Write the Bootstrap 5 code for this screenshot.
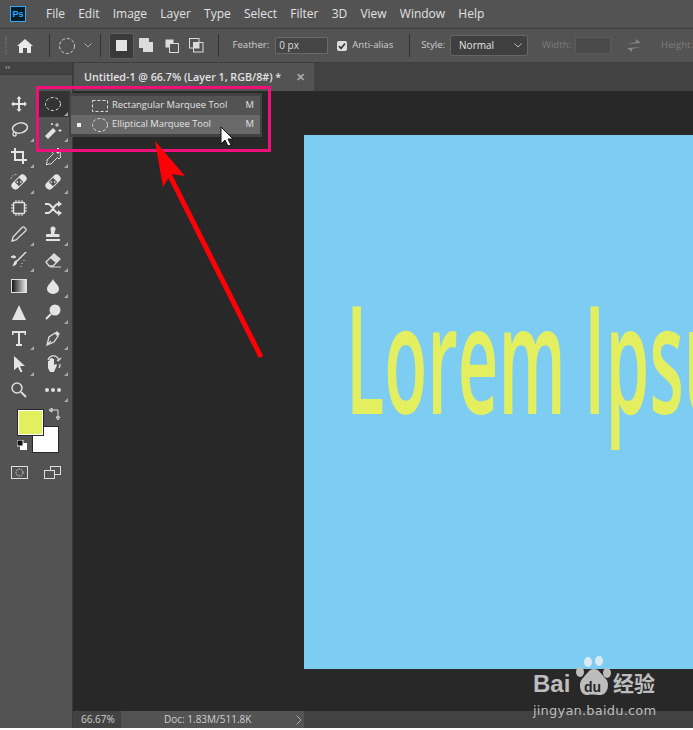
<!DOCTYPE html>
<html lang="en">
<head>
  <meta charset="UTF-8">
  <title>Photoshop Marquee Tool</title>
  <meta name="viewport" content="width=device-width, initial-scale=1">
  <link href="https://cdn.jsdelivr.net/npm/bootstrap@5.3.3/dist/css/bootstrap.min.css" rel="stylesheet">
  <style>
    html, body { height: 100%; }
    body {
      width: 693px; height: 730px; overflow: hidden; position: relative;
      background: #fff; color: #dcdcdc;
      font-family: "Liberation Sans", Arial, sans-serif; font-size: 11px;
    }
    .ps-window { height: 728px; background: #535353; }
    svg { display: block; }

    .ps-menubar { height: 29px; flex: none; background: #535353; border-bottom: 1px solid #3e3e3e; padding-left: 10px; }
    .ps-logo { width: 16px; height: 16px; border: 1px solid #31a8ff; background: #001d26; color: #31a8ff; font-size: 9px; font-weight: 700; line-height: 14px; text-align: center; margin-right: 20px; }
    .ps-menu { font-family: "Open Sans", sans-serif; font-size: 12px; color: #e2e2e2; margin-right: 13.2px; }

    .ps-options { height: 34px; flex: none; background: #535353; border-bottom: 1px solid #3e3e3e; white-space: nowrap; overflow: hidden; }
    .ps-grip { width: 6px; height: 18px; margin: 0 9px 0 5px; background: repeating-linear-gradient(#6c6c6c 0 1px, transparent 1px 2px); }
    .ps-sep { width: 1px; height: 23px; background: #333; flex: none; }
    .ps-mode { width: 25px; height: 26px; flex: none; }
    .ps-mode-on { background: #3a3a3a; border: 1px solid #5f5f5f; border-radius: 2px; }
    .ps-lbl { font-family: "Open Sans", sans-serif; font-size: 9.6px; color: #cfcfcf; }
    .ps-dim { color: #7d7d7d; }
    .ps-field { height: 17px; flex: none; background: #454545; border: 1px solid #6a6a6a; border-radius: 1px; font-size: 10px; font-family: "Open Sans", sans-serif; line-height: 15px; padding-left: 3px; color: #dcdcdc; }
    .ps-check { width: 10px; height: 10px; flex: none; background: #dedede; border-radius: 2px; }
    .ps-select { width: 78px; height: 21px; flex: none; background: #3f3f3f; border: 1px solid #666; border-radius: 3px; font-family: "Open Sans", sans-serif; font-size: 10px; color: #e6e6e6; padding: 0 5px 0 8px; }

    .ps-body { height: 665px; }
    .ps-tools { width: 73px; background: #535353; border-right: 1px solid #3a3a3a; }
    .ps-collapse { height: 12px; background: #424242; color: #b5b5b5; font-size: 8px; line-height: 10px; padding-left: 5px; border-bottom: 1px solid #3a3a3a; }
    .ps-toolgrid { display: grid; grid-template-columns: 34px 34px; grid-auto-rows: 26px; padding: 16px 0 0 2px; }
    .ps-tool { display: flex; align-items: center; justify-content: center; position: relative; }
    .ps-tool-more::after { content: ""; position: absolute; right: 2px; bottom: 1px; border: 2px solid transparent; border-right-color: #a8a8a8; border-bottom-color: #a8a8a8; }
    .ps-tool-on { background: #333; }
    .ps-swatches { height: 52px; position: relative; }
    .ps-fg { width: 25px; height: 25px; background: #e2ef5e; border: 1px solid #fff; outline: 1px solid #2a2a2a; position: absolute; left: 18px; top: 7px; z-index: 1; }
    .ps-bg { width: 25px; height: 25px; background: #fff; outline: 1px solid #2a2a2a; position: absolute; left: 33px; top: 24px; }

    .ps-main { flex: 1; min-width: 0; background: #282828; }
    .ps-tabs { height: 29px; background: #424242; border-bottom: 1px solid #2a2a2a; padding-left: 1px; }
    .ps-tab { width: 240px; background: #535353; font-size: 10.7px; font-weight: 600; color: #e2e2e2; font-family: "Open Sans", sans-serif; padding: 0 9px 0 10px; white-space: nowrap; }
    .ps-canvas-area { flex: 1; min-height: 0; padding: 43px 0 0 231px; overflow: hidden; }
    .ps-canvas { background: #7dcdf3; height: 534px; width: 462px; overflow: hidden; }
    .ps-lorem { font-family: "Open Sans", sans-serif; font-weight: 600; color: #e4ef60; font-size: 150px; line-height: 1; white-space: nowrap; transform-origin: 0 0; transform: translate(42px, 146px) scaleX(0.47); }
    .ps-status { height: 17px; background: #424242; font-family: "Open Sans", sans-serif; font-size: 10px; color: #cfcfcf; }
    .ps-zoomval { width: 48px; padding-left: 8px; line-height: 17px; }
    .ps-docval { width: 183px; background: #535353; padding-left: 43px; line-height: 17px; white-space: nowrap; }

    /* things lying over the document */
    .ps-flyout { position: absolute; left: 69px; top: 93px; width: 193px; height: 44px; background: #424242; padding: 3px 2px; font-family: "Open Sans", sans-serif; font-size: 9.4px; color: #e2e2e2; }
    .ps-fly-row { height: 19px; padding: 0 6px 0 6px; background: #535353; }
    .ps-fly-on { background: #696969; }
    .ps-bullet { width: 4px; height: 4px; background: #eee; margin-right: 11px; }
    .ps-nobullet { width: 4px; margin-right: 11px; }
    .ps-pinkbox { position: absolute; left: 36px; top: 86px; width: 235px; height: 66px; border: 3px solid #f0107a; pointer-events: none; }
    .ps-overlay { position: absolute; left: 0; top: 0; pointer-events: none; }
    .ps-wm { position: absolute; left: 533px; top: 670px; color: #bdbdbd; line-height: 1; }
    .ps-wm-bai { font-size: 24px; font-weight: 700; position: absolute; left: 0; top: 2px; }
    .ps-wm-cn { font-family: "Noto Sans CJK SC", sans-serif; font-size: 21px; font-weight: 700; position: absolute; left: 80px; top: 2px; white-space: nowrap; }
    .ps-wm-url { font-family: "DejaVu Sans", sans-serif; font-size: 13px; position: absolute; left: 0; top: 34px; white-space: nowrap; letter-spacing: .2px; }
    .ps-wm-du { position: absolute; left: 51px; top: 10px; font-size: 14px; font-weight: 700; color: #282828; }
  </style>
</head>
<body>
  <div class="ps-window d-flex flex-column">
    <div class="ps-menubar d-flex align-items-center">
      <div class="ps-logo">Ps</div>
      <span class="ps-menu">File</span><span class="ps-menu">Edit</span><span class="ps-menu">Image</span><span class="ps-menu">Layer</span><span class="ps-menu">Type</span><span class="ps-menu">Select</span><span class="ps-menu">Filter</span><span class="ps-menu">3D</span><span class="ps-menu">View</span><span class="ps-menu">Window</span><span class="ps-menu">Help</span>
    </div>

    <div class="ps-options d-flex align-items-center">
      <div class="ps-grip"></div>
      <svg width="16" height="14" viewBox="0 0 16 14" style="margin:0 17px 0 0;flex:none;transform:translateX(1px)"><path d="M8 0 16 7h-2v7h-4V9H6v5H2V7H0z" fill="#e8e8e8"/></svg>
      <div class="ps-sep" style="margin-right:8px"></div>
      <svg width="18" height="18" viewBox="0 0 18 18" style="flex:none"><circle cx="9" cy="9" r="7.5" fill="none" stroke="#d5d5d5" stroke-dasharray="3 2"/></svg>
      <svg width="8" height="5" viewBox="0 0 8 5" style="margin:0 8px;flex:none"><path d="M.5.5 4 4 7.5.5" fill="none" stroke="#a5a5a5"/></svg>
      <div class="ps-sep" style="margin-right:8px"></div>
      <div class="ps-mode ps-mode-on d-flex align-items-center justify-content-center"><svg width="11" height="11"><rect width="11" height="11" fill="#e4e4e4"/></svg></div>
      <div class="ps-mode d-flex align-items-center justify-content-center"><svg width="15" height="15"><path d="M0 0h10v4h4v10H4v-4H0z" fill="#dcdcdc"/></svg></div>
      <div class="ps-mode d-flex align-items-center justify-content-center"><svg width="14" height="14"><rect x=".5" y=".5" width="8" height="8" fill="#dcdcdc"/><rect x="4.5" y="4.5" width="9" height="9" fill="#535353" stroke="#dcdcdc"/></svg></div>
      <div class="ps-mode d-flex align-items-center justify-content-center" style="margin-right:9px"><svg width="15" height="15"><rect x=".5" y=".5" width="9.5" height="9.5" fill="none" stroke="#dcdcdc"/><rect x="4.5" y="4.5" width="9.5" height="9.5" fill="none" stroke="#dcdcdc"/><rect x="4.5" y="4.5" width="5.5" height="5.5" fill="#dcdcdc"/></svg></div>
      <div class="ps-sep" style="margin-right:13px"></div>
      <span class="ps-lbl" style="margin-right:6px">Feather:</span>
      <div class="ps-field" style="width:53px;margin-right:9px">0 px</div>
      <div class="ps-check d-flex align-items-center justify-content-center" style="margin-right:5px"><svg width="8" height="8" viewBox="0 0 8 8"><path d="M1 4 3 6.5 7 1.5" fill="none" stroke="#333" stroke-width="1.6"/></svg></div>
      <span class="ps-lbl" style="margin-right:16px">Anti-alias</span>
      <div class="ps-sep" style="margin-right:11px"></div>
      <span class="ps-lbl" style="margin-right:5px">Style:</span>
      <div class="ps-select d-flex align-items-center justify-content-between" style="margin-right:14px">Normal<svg width="8" height="5" viewBox="0 0 8 5"><path d="M.5.5 4 4 7.5.5" fill="none" stroke="#bbb"/></svg></div>
      <span class="ps-lbl ps-dim" style="margin-right:4px">Width:</span>
      <div class="ps-field" style="width:36px;background:#4a4a4a;border-color:#5c5c5c;margin-right:16px"></div>
      <svg width="14" height="13" viewBox="0 0 14 13" style="margin-right:20px;flex:none"><path d="M0 5 L9 3V0l5 4-14 1zM14 8 5 10v3L0 9z" fill="#868686"/></svg>
      <span class="ps-lbl ps-dim">Height:</span>
    </div>

    <div class="ps-body d-flex">
      <div class="ps-tools flex-shrink-0">
        <div class="ps-collapse">&#8249;&#8249;</div>
        <div class="ps-toolgrid">
          <div class="ps-tool"><svg width="16" height="16" viewBox="0 0 16 16"><path d="M8 0 10.5 3H9V7h4V5.500L16 8l-3 2.500V9H9v4h1.500L8 16l-2.500-3H7V9H3v1.500L0 8l3-2.500V7h4V3H5.500z" fill="#e4e4e4"/></svg></div>
          <div class="ps-tool ps-tool-on ps-tool-more"><svg width="18" height="16" viewBox="0 0 18 16"><ellipse cx="9" cy="8" rx="7.500" ry="6.500" fill="none" stroke="#ddd" stroke-dasharray="3 2"/></svg></div>
          <div class="ps-tool ps-tool-more"><svg width="18" height="17" viewBox="0 0 18 17"><ellipse cx="10" cy="6" rx="7.500" ry="5" transform="rotate(-12 10 6)" fill="none" stroke="#ddd" stroke-width="1.500"/><path d="M4 10c-2 2-1 4 1 4s1-3 0-3" fill="none" stroke="#ddd" stroke-width="1.300"/></svg></div>
          <div class="ps-tool ps-tool-more"><svg width="17" height="17" viewBox="0 0 17 17"><path d="M0 14 8 6l3 3-8 8z" fill="#e4e4e4"/><path d="M12 1v4M10 3h4M15 7v3M13.500 8.500h3M7 1v2M6 2h2" stroke="#e4e4e4"/></svg></div>
          <div class="ps-tool ps-tool-more"><svg width="16" height="16" viewBox="0 0 16 16"><path d="M4 0v12h12M0 4h12v12" fill="none" stroke="#e4e4e4" stroke-width="2"/></svg></div>
          <div class="ps-tool ps-tool-more"><svg width="15" height="17" viewBox="0 0 15 17"><path d="M14 2 12 0 9 3 8 2 6 4 7.500 5.500 1 12v3L0 16l1 1 1-1h3l6.500-6.500L13 11l2-2-1-1 1-3z" fill="none" stroke="#ddd"/><path d="M9 3l3 3 2-2-2-3z" fill="#ddd"/></svg></div>
          <div class="ps-tool ps-tool-more"><svg width="18" height="18" viewBox="0 0 18 18"><path d="M1 6a5 5 0 0 1 7-4" fill="none" stroke="#ddd" stroke-dasharray="1.500 1.500"/><g transform="rotate(-45 9 9)"><rect x="0" y="5" width="18" height="8" rx="4" fill="#e4e4e4"/><rect x="6" y="6" width="6" height="6" fill="#535353"/><path d="M7 7h1.500v1.500H7zM9.500 9.500H11V11H9.500z" fill="#e4e4e4"/></g></svg></div>
          <div class="ps-tool ps-tool-more"><svg width="18" height="18" viewBox="0 0 18 18"><g transform="rotate(-45 9 9)"><rect x="0" y="5" width="18" height="8" rx="4" fill="#e4e4e4"/><rect x="6" y="6" width="6" height="6" fill="#535353"/><path d="M7 7h1.500v1.500H7zM9.500 9.500H11V11H9.500z" fill="#e4e4e4"/></g></svg></div>
          <div class="ps-tool"><svg width="16" height="16" viewBox="0 0 16 16"><rect x="2.500" y="2.500" width="11" height="11" rx="1" fill="none" stroke="#e4e4e4" stroke-width="1.500"/><path d="M5 0v3M8 0v3M11 0v3M5 13v3M8 13v3M11 13v3M0 5h3M0 8h3M0 11h3M13 5h3M13 8h3M13 11h3" stroke="#e4e4e4"/></svg></div>
          <div class="ps-tool"><svg width="17" height="15" viewBox="0 0 17 15"><path d="M0 3h3c4 0 6 9 10 9h1M0 12h3c4 0 6-9 10-9h1" fill="none" stroke="#e4e4e4" stroke-width="2"/><path d="M13 0l4 3-4 3zM13 9l4 3-4 3z" fill="#e4e4e4"/></svg></div>
          <div class="ps-tool ps-tool-more"><svg width="16" height="16" viewBox="0 0 16 16"><path d="M1 15l1-4 9-9.500a1.500 1.500 0 0 1 2.500 0l1 1a1.500 1.500 0 0 1 0 2.500L5 14z" fill="none" stroke="#ddd" stroke-width="1.300"/></svg></div>
          <div class="ps-tool ps-tool-more"><svg width="16" height="16" viewBox="0 0 16 16"><path d="M5.500 3a2.500 2.500 0 1 1 5 0c0 2-1 2-1 4v1h4a1 1 0 0 1 1 1v2H1V9a1 1 0 0 1 1-1h4V7c0-2-.5-2-.5-4zM1 13h14v2H1z" fill="#e4e4e4"/></svg></div>
          <div class="ps-tool ps-tool-more"><svg width="17" height="17" viewBox="0 0 17 17"><path d="M16 0 8 8l-2 2c0 3-3 4-5 4 2-1 1-3 3-5l2-1 8-8z" fill="#e4e4e4"/><path d="M0 5c2-2 4-1 5 0L3 6zM11 11v1M13 8v1M10 14v1" stroke="#ddd" fill="#ddd"/></svg></div>
          <div class="ps-tool ps-tool-more"><svg width="16" height="15" viewBox="0 0 16 15"><path d="M1 9 9 1l6 5-7 7H4z" fill="none" stroke="#ddd" stroke-width="1.300"/><path d="M5 5l6 5 4-4-6-5z" fill="#ddd"/><path d="M5 14h11" stroke="#ddd"/></svg></div>
          <div class="ps-tool"><svg width="16" height="14"><defs><linearGradient id="grad"><stop offset="0" stop-color="#111"/><stop offset="1" stop-color="#eee"/></linearGradient></defs><rect x=".5" y=".5" width="15" height="13" fill="url(#grad)" stroke="#e0e0e0"/></svg></div>
          <div class="ps-tool ps-tool-more"><svg width="12" height="15" viewBox="0 0 12 15"><path d="M6 0C5 3 0 6 0 10a6 5 0 0 0 12 0C12 6 7 3 6 0z" fill="#e4e4e4"/></svg></div>
          <div class="ps-tool"><svg width="14" height="15"><path d="M7 0 14 15H0z" fill="#e4e4e4"/></svg></div>
          <div class="ps-tool ps-tool-more"><svg width="16" height="16" viewBox="0 0 16 16"><circle cx="10" cy="6" r="5.500" fill="#e4e4e4"/><path d="M6 10 1 15" stroke="#e4e4e4" stroke-width="2"/></svg></div>
          <div class="ps-tool ps-tool-more"><svg width="14" height="15" viewBox="0 0 14 15"><path d="M0 0h14v4h-1.500V2H8v11h2v2H4v-2h2V2H1.500v2H0z" fill="#e4e4e4"/></svg></div>
          <div class="ps-tool ps-tool-more"><svg width="15" height="16" viewBox="0 0 15 16"><path d="M1 15 3 7l6-4 3 3-4 6zM1 15l4-4" fill="none" stroke="#ddd" stroke-width="1.300"/><path d="M9 3l2-2 3 3-2 2z" fill="#ddd"/></svg></div>
          <div class="ps-tool ps-tool-more"><svg width="11" height="16" viewBox="0 0 11 16"><path d="M0 0 11 10H6l2.500 6-2 .5L4 11l-4 3z" fill="#e4e4e4"/></svg></div>
          <div class="ps-tool ps-tool-more"><svg width="17" height="18" viewBox="0 0 17 18"><path d="M3 9V6h1.500v2V3.500H6V8V3h1.500v5V4H9v6l2-1 1 1-3 7H5l-2-4z" fill="#e4e4e4"/><path d="M3 5c2-6 9-5 11 0M14 5l2-2M14 6l-2-1M15 9a6 6 0 0 1-1 4" fill="none" stroke="#ddd" stroke-width="1.300"/></svg></div>
          <div class="ps-tool"><svg width="16" height="16" viewBox="0 0 16 16"><circle cx="6" cy="6" r="5" fill="none" stroke="#ddd" stroke-width="1.500"/><path d="M10 10l5 5" stroke="#ddd" stroke-width="2"/></svg></div>
          <div class="ps-tool ps-tool-more"><svg width="16" height="4"><circle cx="2" cy="2" r="2" fill="#e0e0e0"/><circle cx="8" cy="2" r="2" fill="#e0e0e0"/><circle cx="14" cy="2" r="2" fill="#e0e0e0"/></svg></div>
        </div>
        <div class="ps-swatches">
          <div class="ps-fg"></div>
          <div class="ps-bg"></div>
          <svg class="position-absolute" style="left:49px;top:5px" width="12" height="12" viewBox="0 0 12 12"><path d="M2 4V2h7v8M0 2l3-2v4zM9 12l-2-3h4z" fill="none" stroke="#e0e0e0"/></svg>
          <svg class="position-absolute" style="left:17px;top:37px" width="10" height="10"><rect x="3" y="3" width="7" height="7" fill="#fff"/><rect width="6" height="6" fill="#111" stroke="#eee"/></svg>
        </div>
        <div class="d-flex align-items-center" style="padding:11px 0 0 11px;gap:16px">
          <svg width="17" height="13"><rect x=".5" y=".5" width="16" height="12" fill="none" stroke="#ddd"/><circle cx="8.500" cy="6.500" r="3.500" fill="none" stroke="#ddd" stroke-dasharray="1.500 1"/></svg>
          <svg width="17" height="13"><rect x="6.500" y=".5" width="10" height="8" fill="none" stroke="#ddd"/><rect x=".5" y="4.500" width="10" height="8" fill="#535353" stroke="#ddd"/></svg>
        </div>
      </div>

      <div class="ps-main d-flex flex-column">
        <div class="ps-tabs flex-shrink-0 d-flex">
          <div class="ps-tab d-flex align-items-center justify-content-between"><span>Untitled-1 @ 66.7% (Layer 1, RGB/8#) *</span><span style="color:#aaa">&#10005;</span></div>
        </div>
        <div class="ps-canvas-area">
          <div class="ps-canvas"><div class="ps-lorem">Lorem Ipsum</div></div>
        </div>
        <div class="ps-status flex-shrink-0 d-flex">
          <div class="ps-zoomval">66.67%</div>
          <div class="ps-docval d-flex align-items-center"><span style="width:132px">Doc: 1.83M/511.8K</span><svg width="6" height="10" viewBox="0 0 6 10"><path d="M.5.5 5 5 .5 9.500" fill="none" stroke="#aaa"/></svg></div>
        </div>
      </div>
    </div>
  </div>

  <div class="ps-flyout">
    <div class="ps-fly-row d-flex align-items-center">
      <div class="ps-nobullet"></div>
      <svg width="16" height="12" class="flex-shrink-0" style="margin-right:4px"><rect x=".5" y=".5" width="15" height="11" fill="none" stroke="#ddd" stroke-dasharray="3 2"/></svg>
      <span class="flex-grow-1">Rectangular Marquee Tool</span><span>M</span>
    </div>
    <div class="ps-fly-row ps-fly-on d-flex align-items-center">
      <div class="ps-bullet"></div>
      <svg width="16" height="14" class="flex-shrink-0" style="margin-right:4px"><ellipse cx="8" cy="7" rx="7.500" ry="6.500" fill="none" stroke="#ddd" stroke-dasharray="3 2"/></svg>
      <span class="flex-grow-1">Elliptical Marquee Tool</span><span>M</span>
    </div>
  </div>
  <div class="ps-pinkbox"></div>

  <svg class="ps-overlay" width="693" height="730">
    <path d="M221 127V144L225 140 228 146 231 145 228 139H233z" fill="#fff" stroke="#111"/>
    <path d="M261 357 168 172" stroke="#fe0006" stroke-width="5"/>
    <path d="M155 141 185 176 171 174 163 187z" fill="#fe0006"/>
  </svg>

  <div class="ps-wm">
    <span class="ps-wm-bai">Bai</span>
    <svg class="position-absolute" style="left:43px;top:-14px" width="36" height="42" viewBox="0 0 36 42">
      <ellipse cx="12" cy="6" rx="4" ry="5" fill="#dbeaf5"/><ellipse cx="23" cy="5" rx="4" ry="5" fill="#dbeaf5"/>
      <ellipse cx="4" cy="16" rx="4" ry="5" fill="#bdbdbd"/><ellipse cx="31" cy="17" rx="4" ry="5" fill="#bdbdbd"/>
      <path d="M18 13c5 0 7 5 12 10 4 5 2 16-6 16-3 0-9-1-12 0C4 40 2 28 6 23c5-5 7-10 12-10z" fill="#bdbdbd"/>
    </svg>
    <span class="ps-wm-du">du</span>
    <span class="ps-wm-cn">经验</span>
    <span class="ps-wm-url">jingyan.baidu.com</span>
  </div>

  <script src="https://cdn.jsdelivr.net/npm/bootstrap@5.3.3/dist/js/bootstrap.bundle.min.js"></script>
</body>
</html>
